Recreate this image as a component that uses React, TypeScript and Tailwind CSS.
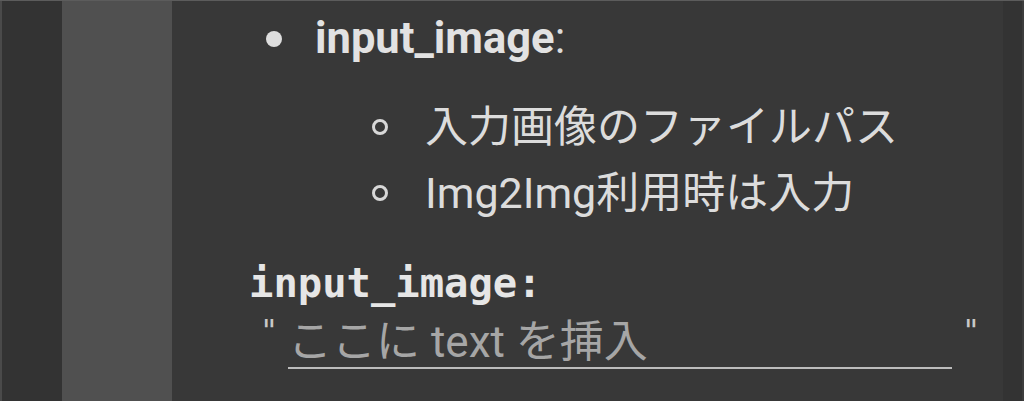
import React from "react";

const sans = { fontFamily: '"Roboto", "Noto Sans CJK JP", sans-serif' };

export default function App() {
  return (
    <div className="w-[1024px] h-[401px] overflow-hidden bg-[#383838] border-t border-[#5c5c5c] flex">
      <div className="w-[2px] bg-[#4a4a4a]" />
      <div className="w-[60px] bg-[#333333]" />
      <div className="w-[110px] bg-[#505050]" />
      <div
        className="flex-1 flex flex-col text-[#dcdcdc] font-['Roboto','Noto_Sans_CJK_JP',sans-serif]"
        style={sans}
      >
        <div className="mt-[8px] h-[60px] flex items-center pl-[94px]">
          <span className="w-[16px] h-[16px] rounded-full bg-[#dedede]" />
          <span className="ml-[33px] text-[43.5px] leading-none">
            <b className="font-bold text-[#e2e2e2]">input_image</b>:
          </span>
        </div>
        <div className="mt-[25px] h-[66px] flex items-center pl-[200px]">
          <span className="w-[16px] h-[16px] rounded-full border-[3px] border-[#d8d8d8]" />
          <span className="ml-[37px] text-[43px] leading-none">入力画像のファイルパス</span>
        </div>
        <div className="h-[66px] flex items-center pl-[200px]">
          <span className="w-[16px] h-[16px] rounded-full border-[3px] border-[#d8d8d8]" />
          <span className="ml-[37px] text-[43px] leading-none">Img2Img利用時は入力</span>
        </div>
        <div className="mt-[32px] h-[50px] flex items-center pl-[77px]">
          <span className="text-[40.5px] leading-none font-bold text-[#e6e6e6] font-['DejaVu_Sans_Mono',monospace]">
            input_image:
          </span>
        </div>
        <div className="h-[64px] flex items-start pl-[88px] pt-[8px]">
          <span className="text-[30px] leading-none text-[#c8c8c8] font-['DejaVu_Sans_Mono',monospace]">"</span>
          <div className="ml-[10px] w-[664px] h-[53px] border-b-2 border-[#bcbcbc] flex items-center">
            <span className="text-[44px] leading-none text-[#a6a6a6]">ここに text を挿入</span>
          </div>
          <span className="ml-[10px] text-[30px] leading-none text-[#c8c8c8] font-['DejaVu_Sans_Mono',monospace]">"</span>
        </div>
      </div>
      <div className="w-[19px] bg-[#333333]" />
      <div className="w-[2px] bg-[#3c3c3c]" />
    </div>
  );
}
